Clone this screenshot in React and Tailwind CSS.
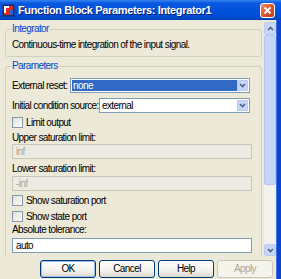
import React from "react";

const font = "font-['Liberation_Sans',Arial,sans-serif]";

function Chevron({ up }) {
  return (
    <svg width="7" height="5" viewBox="0 0 7 5" className={up ? "rotate-180" : ""}>
      <path d="M1 1l2.5 2.5L6 1" fill="none" stroke="#4d6185" strokeWidth="1.6" />
    </svg>
  );
}

function DropButton() {
  return (
    <div className="flex h-full w-[11px] items-center justify-center rounded-[1px] border border-[#b9cbf3] bg-[#c6d6fb]">
      <Chevron />
    </div>
  );
}

function Select({ value, active }) {
  return (
    <div className="flex h-[15px] flex-1 items-stretch border border-[#7f9db9] bg-white p-[1px]">
      <div
        className={
          active
            ? "flex flex-1 items-center bg-[#316ac5] pl-[1px] text-white"
            : "flex flex-1 items-center pl-[1px]"
        }
      >
        {value}
      </div>
      <DropButton />
    </div>
  );
}

function Field({ value, disabled }) {
  return (
    <div
      className={
        disabled
          ? "flex h-[15px] w-[240px] items-center border border-[#c9c7ba] bg-[#ebeae3] pl-[3px] text-[#aca899]"
          : "flex h-[15px] w-[240px] items-center border border-[#7f9db9] bg-white pl-[3px]"
      }
    >
      {value}
    </div>
  );
}

function Check({ label, className }) {
  return (
    <div className={"flex h-[13px] items-center gap-[3px] " + className}>
      <span className="h-[11px] w-[11px] border border-[#8596ad] bg-[linear-gradient(135deg,#dedfd8,#ffffff)]" />
      <span>{label}</span>
    </div>
  );
}

function Btn({ children, primary, disabled }) {
  if (disabled) {
    return (
      <div className="flex h-[18px] w-[56px] items-center justify-center rounded-[3px] border border-[#c9c7ba] bg-[#f5f4ea] text-[#aca899]">
        {children}
      </div>
    );
  }
  return (
    <div
      className={
        primary
          ? "flex h-[18px] w-[56px] items-center justify-center rounded-[3px] border border-[#003c74] bg-[linear-gradient(to_bottom,#ffffff,#f3f2ec_60%,#dcd7cb)] shadow-[inset_0_0_0_1px_#9dbbf0]"
          : "flex h-[18px] w-[56px] items-center justify-center rounded-[3px] border border-[#003c74] bg-[linear-gradient(to_bottom,#ffffff,#f3f2ec_60%,#dcd7cb)]"
      }
    >
      {children}
    </div>
  );
}

function Group({ title, className, children }) {
  return (
    <div className={"relative rounded-[3px] border border-[#d0d0bf] pl-[6px] " + className}>
      <span className="absolute -top-[7px] left-[5px] bg-[#ece9d8] px-[1px] leading-[12px] text-[#0046d5]">
        {title}
      </span>
      {children}
    </div>
  );
}

function AppIcon() {
  return (
    <svg width="13" height="13" viewBox="0 0 13 13">
      <rect x="0.5" y="0.5" width="12" height="12" fill="#1c2c6c" />
      <rect x="2" y="2" width="9" height="9" fill="#e02a1c" />
      <path d="M2 2h5v2H4v5H2z" fill="#f4f4f4" />
      <rect x="7" y="6" width="4" height="5" fill="#2e5fd0" />
    </svg>
  );
}

export default function App() {
  return (
    <div
      className={
        "flex h-[279px] w-[281px] flex-col overflow-hidden whitespace-nowrap bg-[#ece9d8] text-[10px] leading-[12px] tracking-[-0.6px] text-black " +
        font
      }
    >
      {/* title bar */}
      <div className="flex h-[20px] shrink-0 items-center bg-[linear-gradient(to_bottom,#3585f0,#0a58e0_15%,#0052db_55%,#004cd2_85%,#003fb0)] pl-[2px]">
        <AppIcon />
        <span className="ml-[3px] text-[11px] font-bold tracking-[-0.35px] text-white [text-shadow:1px_1px_0_#0a1e6e]">
          Function Block Parameters: Integrator1
        </span>
        <div className="mr-[6px] ml-auto flex h-[15px] w-[15px] items-center justify-center rounded-[3px] border border-white bg-[linear-gradient(135deg,#f09070,#e0552f_50%,#c03a1c)]">
          <svg width="9" height="9" viewBox="0 0 9 9">
            <path d="M1.5 1.5l6 6M7.5 1.5l-6 6" stroke="#fff" strokeWidth="1.8" />
          </svg>
        </div>
      </div>

      <div className="flex min-h-0 flex-1">
        <div className="flex w-[276px] flex-col">
          <div className="flex h-[236px]">
            <div className="w-[264px] overflow-hidden pr-[2px] pl-[5px]">
              <Group title="Integrator" className="mt-[9px] pt-[9px] pb-[5px]">
                <div>Continuous-time integration of the input signal.</div>
              </Group>

              <Group title="Parameters" className="mt-[9px] pt-[11px] pr-[11px] pb-[20px]">
                <div className="flex h-[15px] items-center">
                  <span className="w-[58px]">External reset:</span>
                  <Select value="none" active />
                </div>
                <div className="mt-[5px] flex h-[15px] items-center">
                  <span className="w-[87px]">Initial condition source:</span>
                  <Select value="external" />
                </div>
                <Check label="Limit output" className="mt-[3px]" />
                <div className="mt-[3px]">Upper saturation limit:</div>
                <Field value="inf" disabled />
                <div className="mt-[4px]">Lower saturation limit:</div>
                <div className="mt-[1px]">
                  <Field value="-inf" disabled />
                </div>
                <Check label="Show saturation port" className="mt-[3px]" />
                <Check label="Show state port" className="mt-[3px]" />
                <div className="mt-[1px]">Absolute tolerance:</div>
                <div className="mt-[2px]">
                  <Field value="auto" />
                </div>
              </Group>
            </div>

            {/* scrollbar */}
            <div className="mt-[2px] flex w-[12px] flex-col bg-[#f3f2ee]">
              <div className="flex h-[13px] items-center justify-center rounded-[2px] border border-[#b9cbf3] bg-[#c6d6fb]">
                <Chevron up />
              </div>
              <div className="h-[150px] rounded-[2px] border border-[#b6c9f2] bg-[#c4d5fa]" />
              <div className="flex-1" />
              <div className="flex h-[12px] items-center justify-center rounded-[2px] border border-[#b9cbf3] bg-[#c6d6fb]">
                <Chevron />
              </div>
            </div>
          </div>

          <div className="flex gap-[3px] pt-[4px] pl-[40px]">
            <Btn primary>OK</Btn>
            <Btn>Cancel</Btn>
            <Btn>Help</Btn>
            <Btn disabled>Apply</Btn>
          </div>
        </div>
        <div className="w-[5px] border-l border-[#3f74e4] bg-[#0b43d3]" />
      </div>
    </div>
  );
}
